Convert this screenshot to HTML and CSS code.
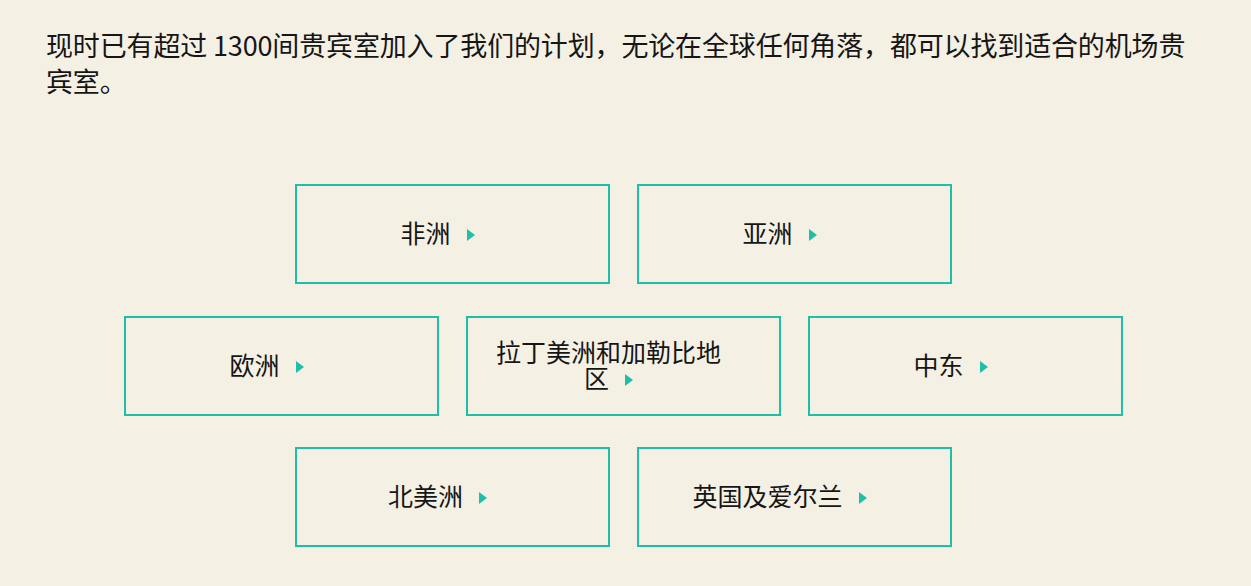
FILE: index.html
```html
<!DOCTYPE html>
<html lang="zh-CN">
<head>
<meta charset="utf-8">
<title>贵宾室</title>
<link rel="stylesheet" href="styles.css">
</head>
<body>
<main class="page">
  <p class="intro">现时已有超过 1300间贵宾室加入了我们的计划，无论在全球任何角落，都可以找到适合的机场贵宾室。</p>
  <div class="regions">
    <div class="row">
      <a class="region" href="#"><span class="label">非洲<span class="arrow"></span></span></a>
      <a class="region" href="#"><span class="label">亚洲<span class="arrow"></span></span></a>
    </div>
    <div class="row">
      <a class="region" href="#"><span class="label">欧洲<span class="arrow"></span></span></a>
      <a class="region" href="#"><span class="label">拉丁美洲和加勒比地区<span class="arrow"></span></span></a>
      <a class="region" href="#"><span class="label">中东<span class="arrow"></span></span></a>
    </div>
    <div class="row">
      <a class="region" href="#"><span class="label">北美洲<span class="arrow"></span></span></a>
      <a class="region" href="#"><span class="label">英国及爱尔兰<span class="arrow"></span></span></a>
    </div>
  </div>
</main>
</body>
</html>
```

FILE: styles.css
```css
html, body {
  margin: 0;
  padding: 0;
  background: #f4f0e4;
}

body {
  font-family: "Noto Sans CJK SC", "Noto Sans", sans-serif;
  color: #161616;
}

.page {
  padding: 27px 46px 0 46px;
}

.intro {
  margin: 0;
  font-size: 27px;
  line-height: 36px;
  letter-spacing: -0.15px;
}

.regions {
  margin-top: 85px;
  padding-right: 4px;
  display: flex;
  flex-direction: column;
  gap: 31.5px;
}

.row {
  display: flex;
  justify-content: center;
  gap: 27px;
}

.region {
  box-sizing: border-box;
  width: 315px;
  height: 100px;
  border: 2px solid #1dbfa9;
  display: flex;
  align-items: center;
  padding: 0 55px 4px 25px;
  text-decoration: none;
  color: #161616;
}

.label {
  display: block;
  width: 100%;
  text-align: center;
  font-size: 25px;
  line-height: 26px;
}

.arrow {
  display: inline-block;
  width: 0;
  height: 0;
  margin-left: 16px;
  border-left: 8px solid #1dbfa9;
  border-top: 6.5px solid transparent;
  border-bottom: 6.5px solid transparent;
  vertical-align: 2px;
}
```
